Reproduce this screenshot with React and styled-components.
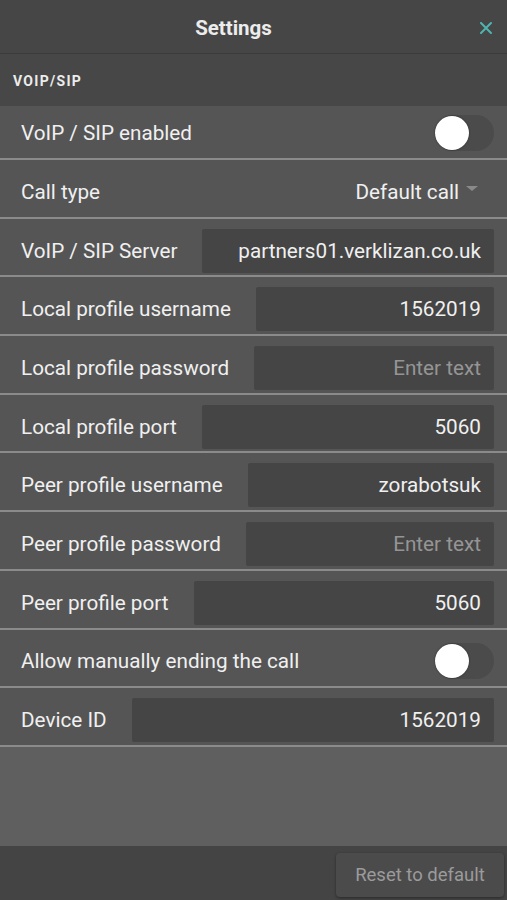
import React from "react";
import styled, { createGlobalStyle } from "styled-components";

const GlobalStyle = createGlobalStyle`
  html, body {
    margin: 0;
    padding: 0;
    background: #474747;
    font-family: Roboto, "Liberation Sans", sans-serif;
  }
`;

const Page = styled.div`
  display: flex;
  flex-direction: column;
  width: 507px;
  height: 900px;
  background: #5f5f5f;
  color: #f0f0f0;
`;

const Header = styled.div`
  position: relative;
  display: flex;
  align-items: center;
  justify-content: center;
  box-sizing: border-box;
  height: 54px;
  padding: 2px 40px 0 0;
  background: #464646;
  border-bottom: 1px solid #3b3b3b;
`;

const Title = styled.h1`
  margin: 0;
  font-size: 20.5px;
  font-weight: 700;
  color: #ececec;
`;

const CloseButton = styled.svg`
  position: absolute;
  right: 15px;
  top: 22px;
  width: 12px;
  height: 12px;
`;

const SectionHeader = styled.div`
  display: flex;
  align-items: center;
  height: 52px;
  padding: 2px 0 0 13px;
  box-sizing: border-box;
  background: #474747;
  font-size: 14px;
  font-weight: 700;
  letter-spacing: 1.3px;
  color: #ececec;
`;

const List = styled.div`
  display: flex;
  flex-direction: column;
`;

const Row = styled.div`
  display: flex;
  align-items: center;
  box-sizing: border-box;
  height: ${(p) => (p.$first ? "54px" : "58.7px")};
  padding: ${(p) => (p.$first ? "2px" : "7px")} 13px 0 21px;
  background: #555555;
  border-bottom: 2px solid #8b8b8b;
  font-size: 20.7px;
`;

const Label = styled.span`
  flex-shrink: 0;
  color: #f0f0f0;
`;

const Field = styled.div`
  flex: 1;
  margin-left: 25px;
  height: 44px;
  display: flex;
  align-items: center;
  justify-content: flex-end;
  padding-right: 13px;
  background: #454545;
  border-radius: 2px;
  color: ${(p) => (p.$placeholder ? "#959595" : "#f0f0f0")};
`;

const Toggle = styled.div`
  margin-left: auto;
  position: relative;
  width: 59px;
  height: 36px;
  border-radius: 18px;
  background: #4b4b4b;
`;

const Thumb = styled.div`
  position: absolute;
  left: 0;
  top: 1px;
  width: 34px;
  height: 34px;
  border-radius: 50%;
  background: #ffffff;
  box-shadow: 0 0 2px rgba(0, 0, 0, 0.5);
`;

const Select = styled.div`
  margin-left: auto;
  display: flex;
  align-items: center;
  gap: 7px;
  padding-right: 16px;
`;

const Caret = styled.span`
  width: 0;
  height: 0;
  border-left: 6px solid transparent;
  border-right: 6px solid transparent;
  border-top: 5px solid #8a8a8a;
  margin-top: -6px;
`;

const Spacer = styled.div`
  flex: 1;
  background: #5f5f5f;
`;

const Footer = styled.div`
  display: flex;
  align-items: center;
  justify-content: flex-end;
  height: 54px;
  padding-right: 3px;
  background: #444444;
`;

const ResetButton = styled.button`
  height: 44px;
  width: 168px;
  border: none;
  border-radius: 4px;
  background: #4b4b4b;
  box-shadow: 0 1px 3px rgba(0, 0, 0, 0.4);
  color: #9b9b9b;
  font-family: Roboto, "Liberation Sans", sans-serif;
  font-size: 18.5px;
  margin-top: 4px;
`;

const fields = [
  { label: "VoIP / SIP Server", value: "partners01.verklizan.co.uk" },
  { label: "Local profile username", value: "1562019" },
  { label: "Local profile password", placeholder: "Enter text" },
  { label: "Local profile port", value: "5060" },
  { label: "Peer profile username", value: "zorabotsuk" },
  { label: "Peer profile password", placeholder: "Enter text" },
  { label: "Peer profile port", value: "5060" },
];

const App = () => {
  return (
    <Page>
      <GlobalStyle />
      <Header>
        <Title>Settings</Title>
        <CloseButton viewBox="0 0 12 12">
          <path d="M1 1 L11 11 M11 1 L1 11" stroke="#4fb3b0" strokeWidth="2" strokeLinecap="round" />
        </CloseButton>
      </Header>
      <SectionHeader>VOIP/SIP</SectionHeader>
      <List>
        <Row $first>
          <Label>VoIP / SIP enabled</Label>
          <Toggle>
            <Thumb />
          </Toggle>
        </Row>
        <Row>
          <Label>Call type</Label>
          <Select>
            Default call
            <Caret />
          </Select>
        </Row>
        {fields.map((f) => (
          <Row key={f.label}>
            <Label>{f.label}</Label>
            <Field $placeholder={!f.value}>{f.value || f.placeholder}</Field>
          </Row>
        ))}
        <Row>
          <Label>Allow manually ending the call</Label>
          <Toggle>
            <Thumb />
          </Toggle>
        </Row>
        <Row>
          <Label>Device ID</Label>
          <Field>1562019</Field>
        </Row>
      </List>
      <Spacer />
      <Footer>
        <ResetButton>Reset to default</ResetButton>
      </Footer>
    </Page>
  );
};

export default App;
